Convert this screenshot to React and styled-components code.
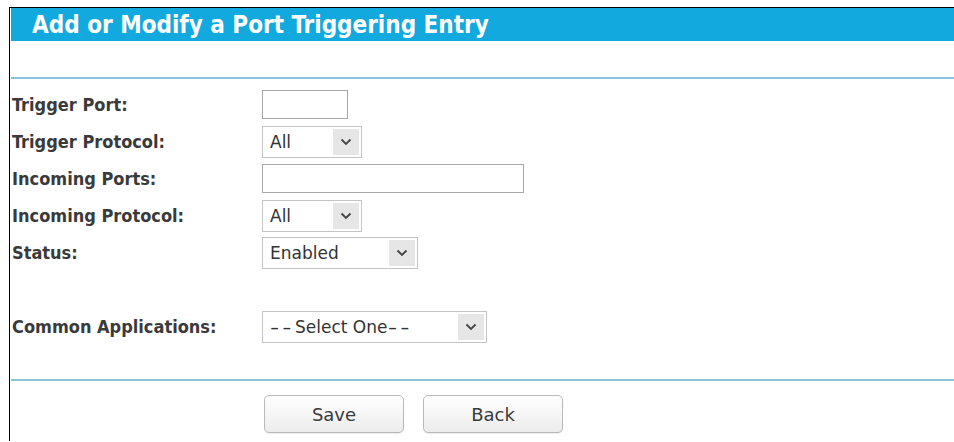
import React from "react";
import styled, { createGlobalStyle } from "styled-components";

const Global = createGlobalStyle`
  html, body { margin: 0; padding: 0; background: #fff; }
  body { font-family: "DejaVu Sans", Verdana, sans-serif; }
`;

const Frame = styled.div`
  margin: 7px 0 0 9px;
  border-top: 1px solid #000;
  border-left: 1px solid #000;
  padding-left: 1px;
  height: 434px;
  box-sizing: border-box;
`;

const Header = styled.div`
  height: 33px;
  background: #12a9df;
  display: flex;
  align-items: center;
  padding-left: 21px;
  color: #fff;
  font-family: "DejaVu Sans Condensed", "DejaVu Sans", sans-serif;
  font-weight: bold;
  font-size: 24px;
  line-height: 1;
`;

const Divider = styled.div`
  height: 2px;
  background: #86c3dd;
  margin-top: ${(p) => p.$top}px;
`;

const Form = styled.div`
  padding-top: 7px;
  display: grid;
  grid-template-columns: 251px 1fr;
  grid-auto-rows: 37px;
  align-items: center;
`;

const Label = styled.div`
  font-family: "DejaVu Sans Condensed", "DejaVu Sans", sans-serif;
  font-weight: bold;
  font-size: 18px;
  color: #3a3a3a;
  padding-left: 1px;
`;

const Spacer = styled.div`
  grid-column: 1 / span 2;
`;

const TextInput = styled.input`
  box-sizing: border-box;
  width: ${(p) => p.$w}px;
  height: 29px;
  border: 1px solid #a8a8a8;
  background: #fff;
  margin: 0;
  padding: 0 6px;
  outline: none;
  display: block;
`;

const SelectBox = styled.div`
  box-sizing: border-box;
  width: ${(p) => p.$w}px;
  height: 32px;
  border: 1px solid #c4c4c4;
  background: #fff;
  display: flex;
  align-items: stretch;
  padding: 2px 2px 2px 7px;
`;

const SelectValue = styled.span`
  flex: 1;
  display: flex;
  align-items: center;
  font-family: "DejaVu Sans", Verdana, sans-serif;
  font-size: 17px;
  color: #333;
  white-space: pre;
`;

const Dashes = styled.span`
  display: inline-block;
  width: 25px;
  letter-spacing: 2px;
  transform: scaleX(1.5);
  transform-origin: left center;
  margin-left: ${(p) => (p.$end ? 1 : 0)}px;
`;

const ArrowBox = styled.span`
  width: 26px;
  background: #e6e6e6;
  display: flex;
  align-items: center;
  justify-content: center;
`;

const Footer = styled.div`
  display: flex;
  gap: 19px;
  padding: 14px 0 0 253px;
`;

const Button = styled.button`
  width: 140px;
  height: 38px;
  border: 1px solid #b9b9b9;
  border-radius: 5px;
  background: linear-gradient(#ffffff, #ececec);
  font-family: "DejaVu Sans", Verdana, sans-serif;
  font-size: 18px;
  color: #3a3a3a;
  margin: 0;
  padding: 0;
  box-shadow: 0 1px 1px rgba(0, 0, 0, 0.08);
`;

const Chevron = () => (
  <svg width="12" height="8" viewBox="0 0 12 8">
    <path d="M1.5 1.5 L6 6 L10.5 1.5" fill="none" stroke="#444" strokeWidth="1.8" />
  </svg>
);

const Select = ({ w, children }) => (
  <SelectBox $w={w} role="combobox">
    <SelectValue>{children}</SelectValue>
    <ArrowBox>
      <Chevron />
    </ArrowBox>
  </SelectBox>
);

export default function App() {
  return (
    <>
      <Global />
      <Frame>
        <Header>Add or Modify a Port Triggering Entry</Header>
        <Divider $top={36} />
        <Form>
          <Label>Trigger Port:</Label>
          <div><TextInput $w={86} /></div>
          <Label>Trigger Protocol:</Label>
          <Select w={100}>All</Select>
          <Label>Incoming Ports:</Label>
          <div><TextInput $w={262} /></div>
          <Label>Incoming Protocol:</Label>
          <Select w={100}>All</Select>
          <Label>Status:</Label>
          <Select w={156}>Enabled</Select>
          <Spacer />
          <Label>Common Applications:</Label>
          <Select w={225}>
            <Dashes>--</Dashes>Select One<Dashes $end>--</Dashes>
          </Select>
        </Form>
        <Divider $top={34} />
        <Footer>
          <Button>Save</Button>
          <Button>Back</Button>
        </Footer>
      </Frame>
    </>
  );
}
